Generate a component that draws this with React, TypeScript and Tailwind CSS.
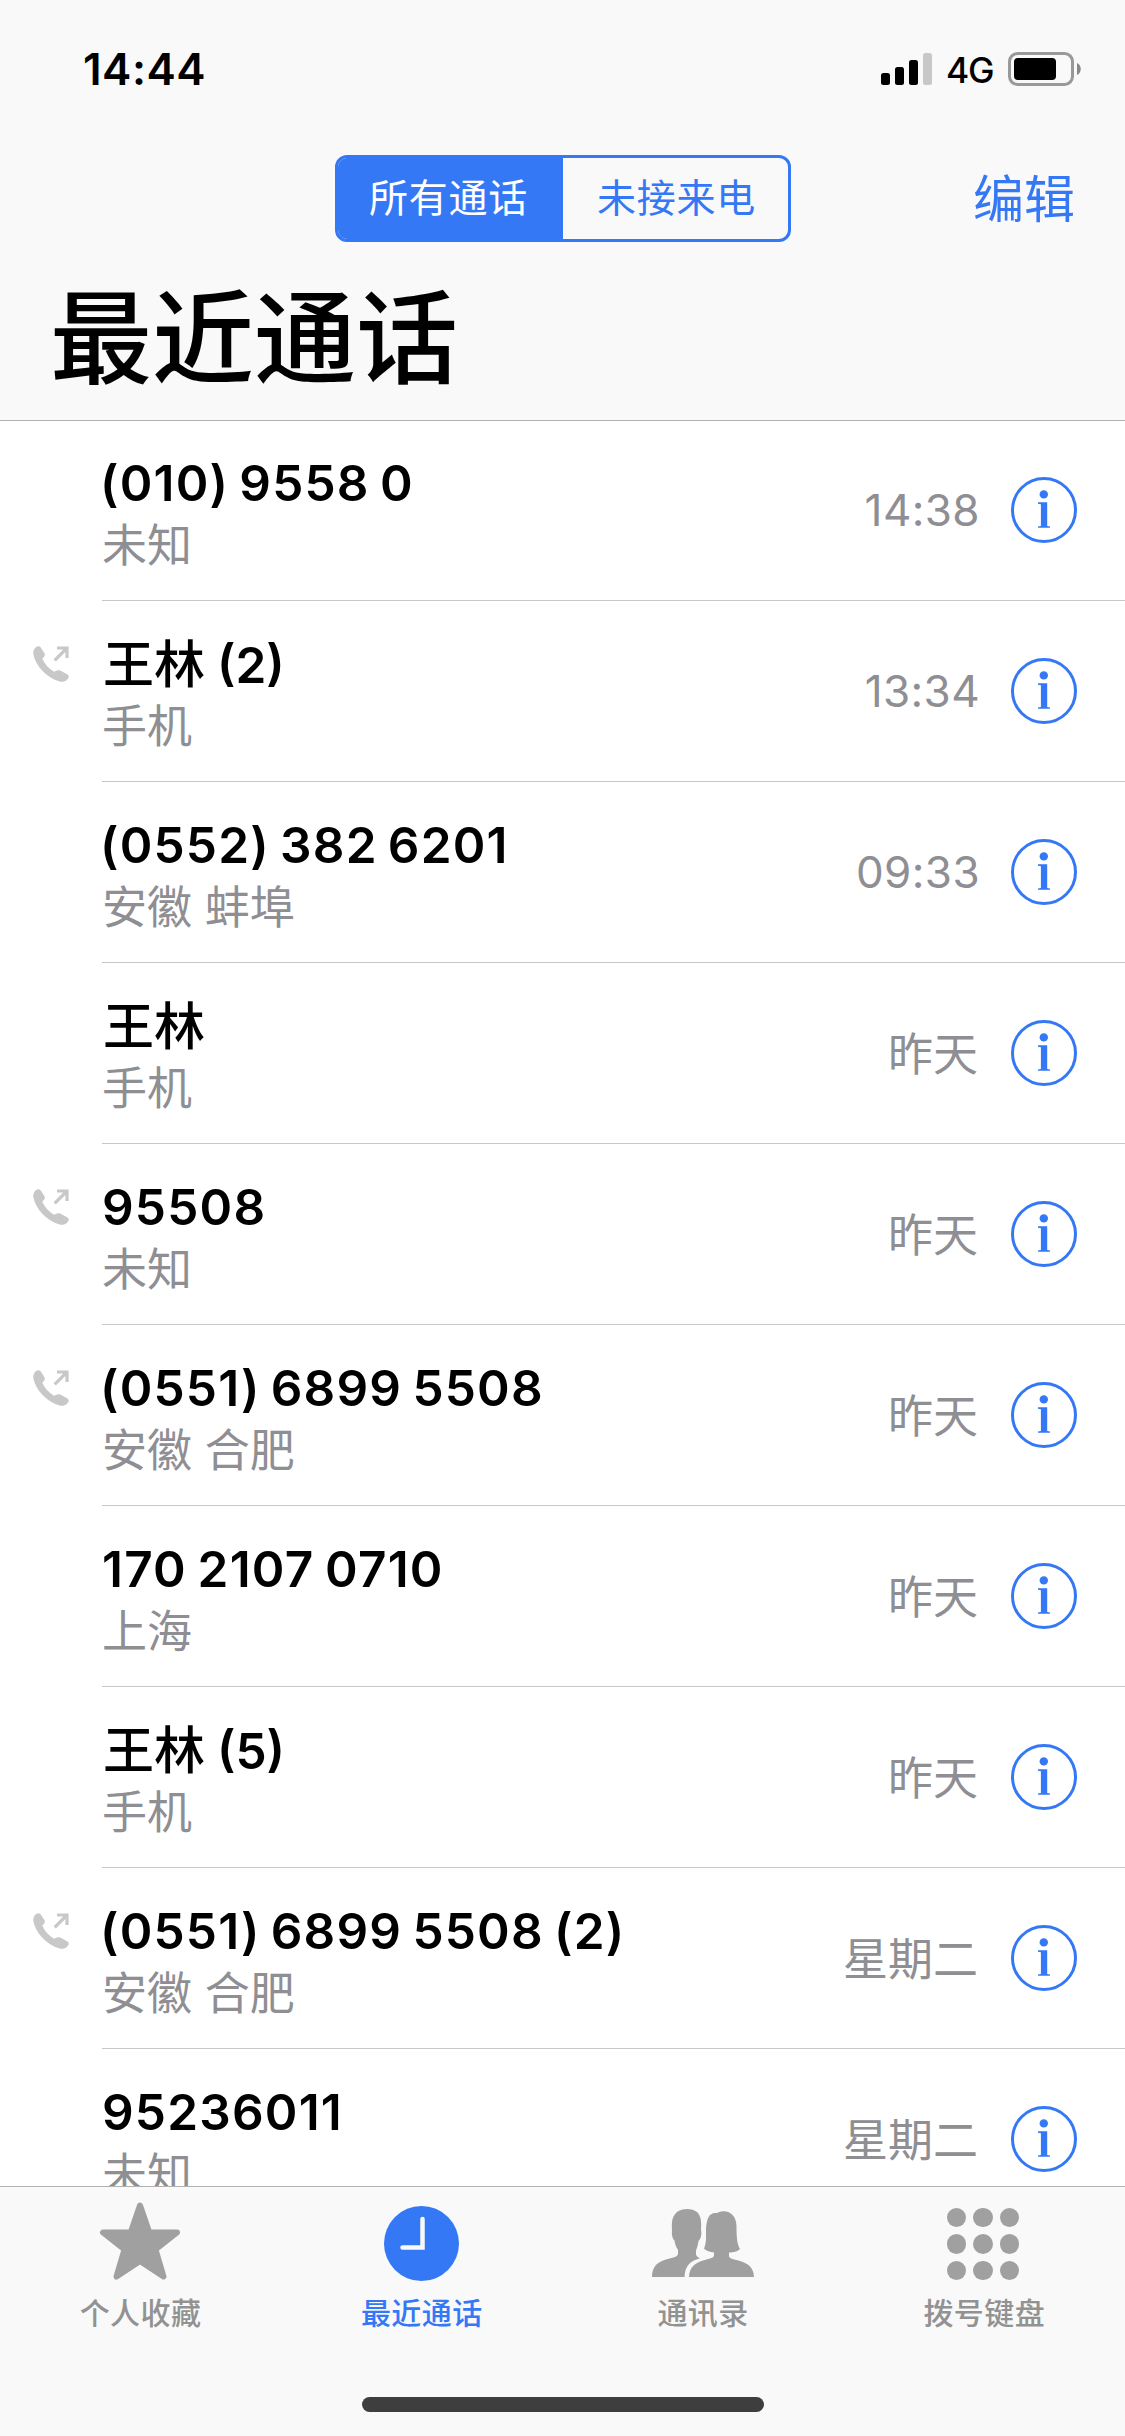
import React from "react";

type Call = { name: string; place: string; when: string; outgoing?: boolean };

const calls: Call[] = [
  { name: "(010) 9558 0", place: "未知", when: "14:38" },
  { name: "王林 (2)", place: "手机", when: "13:34", outgoing: true },
  { name: "(0552) 382 6201", place: "安徽 蚌埠", when: "09:33" },
  { name: "王林", place: "手机", when: "昨天" },
  { name: "95508", place: "未知", when: "昨天", outgoing: true },
  { name: "(0551) 6899 5508", place: "安徽 合肥", when: "昨天", outgoing: true },
  { name: "170 2107 0710", place: "上海", when: "昨天" },
  { name: "王林 (5)", place: "手机", when: "昨天" },
  { name: "(0551) 6899 5508 (2)", place: "安徽 合肥", when: "星期二", outgoing: true },
  { name: "95236011", place: "未知", when: "星期二" },
];

const isHan = (s: string) => /[\u4e00-\u9fff]/.test(s);

function nameClass(part: string, index: number) {
  if (isHan(part)) return "inline-block pt-px pl-px text-[51px] font-medium";
  if (index > 0) return "ml-[12px]";
  return part.startsWith("(")
    ? "-ml-[2px] tracking-[1.2px] [word-spacing:-3.5px]"
    : "tracking-[1.2px] [word-spacing:-3px]";
}

function StatusIcons() {
  return (
    <div className="flex items-center">
      <svg width="51" height="32" viewBox="0 0 51 32" aria-hidden="true">
        <rect x="0" y="20" width="9" height="12" rx="2.5" />
        <rect x="14" y="14" width="9" height="18" rx="2.5" />
        <rect x="28" y="7" width="9" height="25" rx="2.5" />
        <rect x="42" y="0" width="9" height="32" rx="2.5" fill="#c8c8c8" />
      </svg>
      <span className="mt-[3px] ml-[14px] w-[62px] text-[35.5px] leading-[34px] font-medium tracking-[-1.3px]">4G</span>
      <svg width="74" height="34" viewBox="0 0 74 34" aria-hidden="true">
        <rect x="1.5" y="1.5" width="63" height="31" rx="8" fill="none" stroke="#999" strokeWidth="3" />
        <rect x="6" y="6" width="42" height="22" rx="4" />
        <path d="M69 11 C74 13 74 21 69 23 Z" fill="#888" />
      </svg>
    </div>
  );
}

function InfoIcon() {
  return (
    <svg width="66" height="66" viewBox="0 0 66 66" fill="#3478f6" aria-hidden="true">
      <circle cx="33" cy="33" r="31.5" fill="none" stroke="#3478f6" strokeWidth="3" />
      <circle cx="32.8" cy="17.4" r="4.2" />
      <path d="M27 25.2h9.2v23.7l2.8.6v1.2H27v-1.2l2.9-.6V27.3l-2.9-.6z" />
    </svg>
  );
}

function OutgoingIcon() {
  return (
    <svg width="36" height="36" viewBox="0 0 36 36" fill="#c8c8c8" aria-hidden="true">
      <path d="M3.200 1C4.600 0 6.400 0 7.600 1.200L11.200 6.800C12.200 8.500 12 9.800 10.900 11L9.300 12.800C11.600 17.800 15.500 22.600 21 25.800L24 24.600C25.500 24 26.900 24 28.200 24.900L34.500 28.600C36 29.800 36.200 31.200 35 32.600C33 35.500 30.500 36.400 26.500 35.500C13.500 31.500 2.500 20 .300 8C0 4.800 1.200 2.400 3.200 1Z" />
      <path d="M24 2H34V12M34 2L21.700 14.300" fill="none" stroke="#c8c8c8" strokeWidth="3.200" />
    </svg>
  );
}

function CallRow({ call }: { call: Call }) {
  return (
    <li className="flex h-[181px] shrink-0">
      <div className="w-[102px] pt-[45px] pl-[33px]">{call.outgoing && <OutgoingIcon />}</div>
      <div className="flex flex-1 border-b border-[#c8c7cc] pr-[48px]">
        <div className="flex-1 whitespace-nowrap">
          <div className="mt-[33px] h-[60px] text-[49.5px] leading-[60px] font-semibold text-black">
            {call.name.split(/(?<=[\u4e00-\u9fff]) /).map((part, i) => (
              <span key={i} className={nameClass(part, i)}>
                {part}
              </span>
            ))}
          </div>
          <div className="mt-[5px] h-[56px] text-[45px] leading-[56px] text-[#8e8e93]">{call.place}</div>
        </div>
        <div className="flex items-center gap-[31px]">
          <span
            className={
              isHan(call.when)
                ? "mt-[3px] mr-[2px] text-[45px] text-[#8e8e93]"
                : "text-[44px] tracking-[0.4px] text-[#8e8e93]"
            }
          >
            {call.when}
          </span>
          <InfoIcon />
        </div>
      </div>
    </li>
  );
}

function StarIcon() {
  return (
    <svg width="82" height="78" viewBox="0 0 82 78" className="mr-px mb-[5px]" aria-hidden="true">
      <path
        d="M41 3.500 50.300 30.500 78 30.500 56.500 47.500 64.500 74.500 41 59 17.500 74.500 25.500 47.500 4 30.500 31.700 30.500Z"
        fill="#a0a0a0"
        stroke="#a0a0a0"
        strokeWidth="6"
        strokeLinejoin="round"
      />
    </svg>
  );
}

function ClockIcon() {
  return (
    <svg width="75" height="75" viewBox="0 0 75 75" aria-hidden="true">
      <circle cx="37.500" cy="37.500" r="37.500" fill="#3478f6" />
      <path d="M38.500 13V41.500H18.500" fill="none" stroke="#f9f9f9" strokeWidth="4.500" strokeLinecap="round" />
    </svg>
  );
}

function PeopleIcon() {
  return (
    <svg width="102" height="68" viewBox="0 0 102 68" fill="#a0a0a0" aria-hidden="true">
      <path d="M0 68C0 57 6 53 14 50.500 22 48 26 48 26 44.500V41C24 38 23 35 22.500 31.500 20.500 30 19.500 26 20 22 19.500 12 20 8 25 3 30-1 40-1 45 3 49 7 49.500 12 49 21 50 25 49 30 46.500 32 46 36 45 39 44 41.500V45.500C44.500 47.500 46 48 48 49.200 38 52 33 57 32.500 68Z" />
      <path d="M37 68C37.500 58 43 54 51 51.500 59 49 62 49 62 46V43.500C58 43 54 42 52 39.500 54.500 34 54 28 54 20 54.500 10 57 3 65 4 73 0 84 3 84.500 17 84.500 28 85 35 88 40 86 42.500 81 43.500 77 43.500V47C77 49.500 81 50 88 52 96 54.500 101.500 58 102 68Z" />
    </svg>
  );
}

function KeypadIcon() {
  return (
    <div className="mt-[2px] mr-[3px] grid grid-cols-3 gap-[7px]">
      {Array.from({ length: 9 }, (_, i) => (
        <span key={i} className="size-[19.5px] rounded-full bg-[#a0a0a0]" />
      ))}
    </div>
  );
}

function Tab({ label, active, children }: { label: string; active?: boolean; children: React.ReactNode }) {
  return (
    <div className={active ? "flex flex-1 flex-col items-center text-[#3478f6]" : "flex flex-1 flex-col items-center text-[#929292]"}>
      <div className="mt-[13px] flex h-[86px] items-center">{children}</div>
      <span className="mt-[5px] text-[30px] leading-[44px] font-medium tracking-[0.5px]">{label}</span>
    </div>
  );
}

export default function App() {
  return (
    <div className="flex h-[2436px] w-[1125px] flex-col overflow-hidden bg-white font-[Inter,'Noto_Sans_CJK_SC',sans-serif] text-black">
      <header className="flex h-[421px] shrink-0 flex-col border-b border-[#b2b2b2] bg-[#f9f9f9]">
        <div className="flex h-[138px] items-center justify-between pr-[43px] pl-[83px]">
          <span className="text-[44px] font-semibold tracking-[0.5px]">14:44</span>
          <StatusIcons />
        </div>
        <nav className="mt-[17px] grid h-[87px] grid-cols-[1fr_456px_1fr] items-center">
          <div className="col-start-2 flex h-[87px] overflow-hidden rounded-[12px] border-3 border-[#3478f6] text-[39px] tracking-[0.8px]">
            <div className="flex w-[225px] items-center justify-center bg-[#3478f6] pr-[3px] text-white">所有通话</div>
            <div className="flex flex-1 items-center justify-center pl-[3px] text-[#3478f6]">未接来电</div>
          </div>
          <span className="mt-[3px] mr-[50px] text-right text-[51px] text-[#3478f6]">编辑</span>
        </nav>
        <h1 className="mt-[27px] pl-[50px] text-[102px] leading-[140px] font-medium">最近通话</h1>
      </header>

      <ul className="relative -mt-px flex min-h-0 flex-1 flex-col overflow-hidden">
        {calls.map((call, i) => (
          <CallRow key={i} call={call} />
        ))}
      </ul>

      <footer className="flex h-[250px] shrink-0 flex-col items-center border-t border-[#b2b2b2] bg-[#f9f9f9]">
        <div className="flex h-[210px] w-full">
          <Tab label="个人收藏"><StarIcon /></Tab>
          <Tab label="最近通话" active><ClockIcon /></Tab>
          <Tab label="通讯录"><PeopleIcon /></Tab>
          <Tab label="拨号键盘"><KeypadIcon /></Tab>
        </div>
        <div className="h-[15px] w-[402px] rounded-full bg-[#3e3e3e]" />
      </footer>
    </div>
  );
}
